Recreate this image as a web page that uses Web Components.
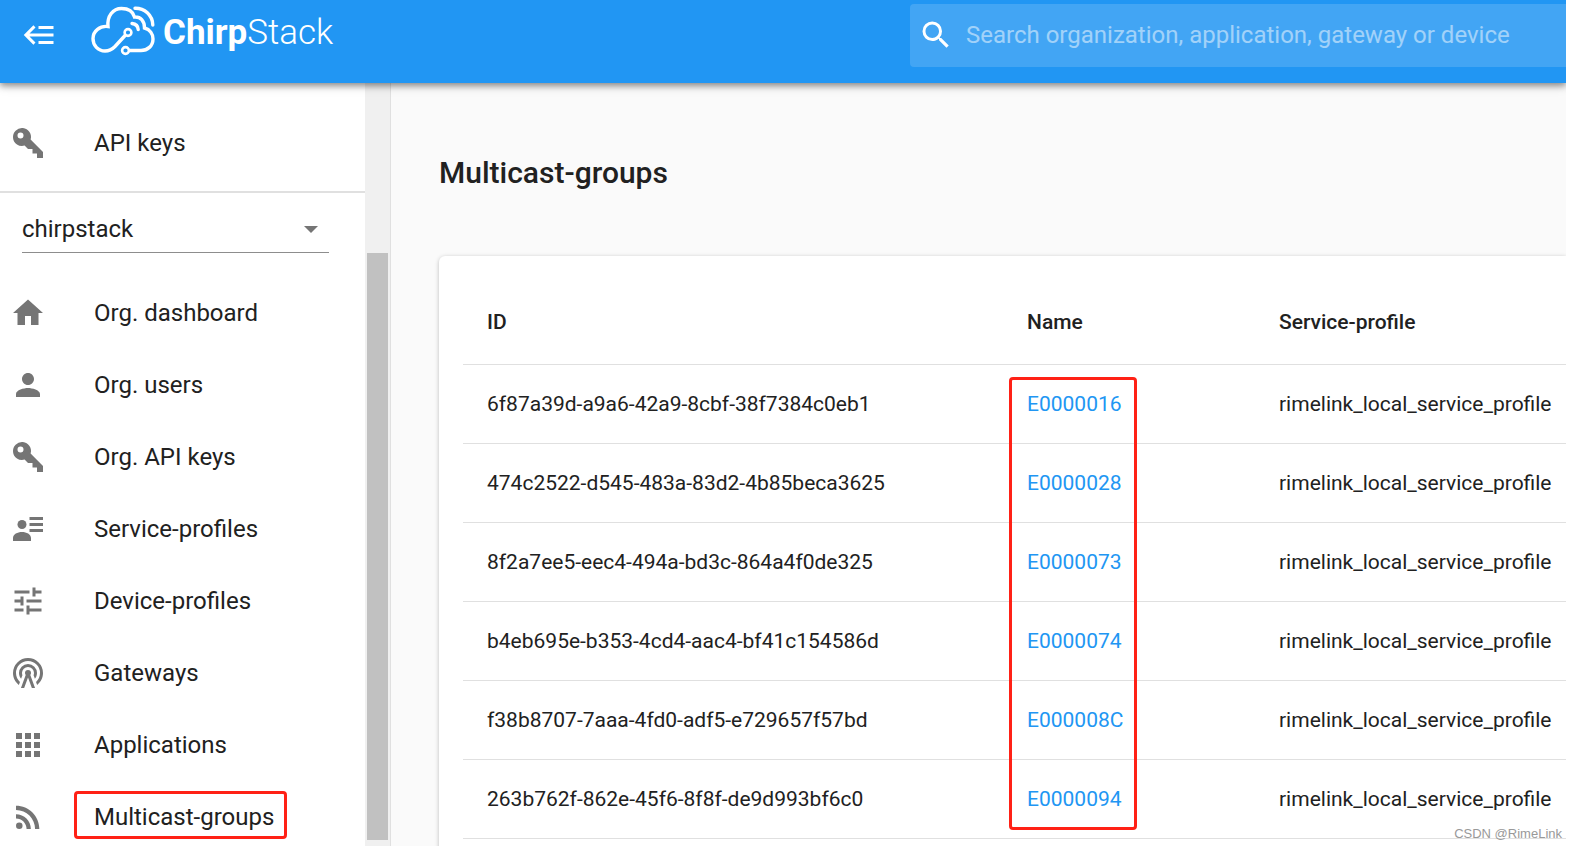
<!DOCTYPE html>
<html lang="en"><head><meta charset="utf-8"><title>ChirpStack</title>
<style>
html,body{margin:0;height:100%}
body{font-family:Roboto,"Liberation Sans",sans-serif;color:#212121;background:#fff;overflow:hidden;box-sizing:border-box;padding:0 10px 2px 0}
</style></head><body>
<chirp-app></chirp-app>
<script>
const ICONS={
key:'<path d="M22 18v4h-4v-3h-3v-3h-3l-2.260-2.260A6 6 0 1 1 13.740 9.740L22 18M7 5a2 2 0 1 0 0 4 2 2 0 0 0 0-4z"/>',
home:'<path d="M10 20v-6h4v6h5v-8h3L12 3 2 12h3v8z"/>',
user:'<path d="M12 12c2.210 0 4-1.790 4-4s-1.790-4-4-4-4 1.790-4 4 1.790 4 4 4zm0 2c-2.670 0-8 1.340-8 4v2h16v-2c0-2.660-5.330-4-8-4z"/>',
profile:'<circle cx="8" cy="9" r="3"/><path d="M2 20v-2C2 15.500 5 14 8 14s6 1.500 6 4v2zM13 4h9v2h-9zM13 8h9v2h-9zM13 12h9v2h-9z"/>',
tune:'<path d="M3 17v2h6v-2H3zM3 5v2h10V5H3zm10 16v-2h8v-2h-8v-2h-2v6h2zM7 9v2H3v2h4v2h2V9H7zm14 4v-2H11v2h10zm-6-4h2V7h4V5h-4V3h-2v6z"/>',
gateway:'<path d="M12,10A2,2 0 0,1 14,12C14,12.5 13.82,12.94 13.53,13.29L16.7,22H14.57L12,14.93L9.43,22H7.3L10.47,13.29C10.18,12.94 10,12.5 10,12A2,2 0 0,1 12,10M12,8A4,4 0 0,0 8,12C8,12.5 8.1,13 8.28,13.46L7.4,15.86C6.53,14.81 6,13.47 6,12A6,6 0 0,1 12,6A6,6 0 0,1 18,12C18,13.47 17.47,14.81 16.6,15.86L15.72,13.46C15.9,13 16,12.5 16,12A4,4 0 0,0 12,8M12,4A8,8 0 0,0 4,12C4,14.36 5,16.5 6.64,17.94L5.92,19.94C3.54,18.11 2,15.23 2,12A10,10 0 0,1 12,2A10,10 0 0,1 22,12C22,15.23 20.46,18.11 18.08,19.94L17.36,17.94C19,16.5 20,14.36 20,12A8,8 0 0,0 12,4Z"/>',
apps:'<path d="M4 4h4v4H4zM10 4h4v4h-4zM16 4h4v4h-4zM4 10h4v4H4zM10 10h4v4h-4zM16 10h4v4h-4zM4 16h4v4H4zM10 16h4v4h-4zM16 16h4v4h-4z"/>',
rss:'<circle cx="6.180" cy="17.820" r="2.180"/><path d="M4 4.440v2.830c7.030 0 12.730 5.700 12.730 12.730h2.830c0-8.590-6.970-15.560-15.560-15.560zm0 5.660v2.830c3.900 0 7.070 3.170 7.070 7.070h2.830c0-5.470-4.430-9.900-9.900-9.900z"/>',
search:'<path d="M15.500 14h-.79l-.28-.27A6.471 6.471 0 0 0 16 9.500 6.500 6.500 0 1 0 9.500 16c1.610 0 3.090-.59 4.230-1.570l.27.28v.79l5 4.990L20.490 19l-4.990-5zm-6 0C7.010 14 5 11.990 5 9.500S7.010 5 9.500 5 14 7.010 14 9.500 11.990 14 9.500 14z"/>',
menu:'<path d="M5,13L9,17L7.6,18.42L1.18,12L7.6,5.58L9,7L5,11H21V13H5M21,6V8H11V6H21M21,16V18H11V16H21Z"/>'
};
function define(name,html){
  const t=document.createElement('template');t.innerHTML=html;
  customElements.define(name,class extends HTMLElement{
    constructor(){super();this.attachShadow({mode:'open'}).append(t.content.cloneNode(true));}
  });
}
customElements.define('app-icon',class extends HTMLElement{
  connectedCallback(){
    if(this.shadowRoot)return;
    this.attachShadow({mode:'open'}).innerHTML='<style>:host{display:block;width:36px;height:36px;flex:none}svg{display:block;width:100%;height:100%;fill:currentColor}</style><svg viewBox="0 0 24 24" aria-hidden="true">'+(ICONS[this.getAttribute('name')]||'')+'</svg>';
  }
});
define('chirp-logo',`<style>
:host{display:flex;gap:8px;color:#fff}
svg{width:64px;height:50px;display:block}
.word{font-size:35px;line-height:40px;padding-top:7px;font-weight:300;white-space:nowrap}
b{font-weight:700}
</style>
<svg viewBox="0 0 64 50" fill="none" stroke="#fff" stroke-width="3.400" stroke-linecap="round" aria-hidden="true">
<path d="M34.500 29L24 40.500C21 43.500 18 45 14 45C7 45 2 39.500 2 32.500C2 25 9 19.500 17 20.500C16 10 22 2.500 30.500 2.500C37 2.500 42 5.500 43.500 11C49.500 10.500 53.500 15 53.500 22C59 23.500 62 28 62 33C62 40 56.500 44.500 50 44.500H38.500"/>
<path d="M44 2.200C53.500 2 61.500 9 61.800 19"/><path d="M41 17.500C45 18 47 20 47.200 23.500"/>
<circle cx="37" cy="26.500" r="3.400" fill="#2196f3" stroke-width="2.600"/><circle cx="34.500" cy="44.500" r="3.400" fill="#2196f3" stroke-width="2.600"/></svg>
<span class="word"><b>Chirp</b>Stack</span>`);
define('app-bar',`<style>
:host{display:flex;height:83px;flex:none;background:#2196f3;color:#fff;position:relative;z-index:2;box-shadow:0 3px 6px rgba(0,0,0,.35),0 1px 12px rgba(0,0,0,.2);box-sizing:border-box;padding:0 0 0 22px;align-items:flex-start}
button{border:0;background:none;padding:17px 0 0;margin:0 33px 0 0;color:inherit}
chirp-logo{margin-top:6px}
.search{display:flex;align-items:center;height:63px;margin:4px 0 0 auto;flex:0 1 656px;min-width:0;background:rgba(255,255,255,.15);border-radius:4px 0 0 4px;box-sizing:border-box;padding:0 0 2px 8px}
input{flex:1;min-width:0;border:0;background:none;outline:0;font:24px/32px Roboto,sans-serif;color:#fff;padding:0;margin-left:12px}
input::placeholder{color:#fff;opacity:.5}
</style>
<button aria-label="Toggle menu"><app-icon name="menu"></app-icon></button>
<chirp-logo></chirp-logo>
<label class="search"><app-icon name="search"></app-icon><input aria-label="Search" placeholder="Search organization, application, gateway or device"></label>`);
define('nav-item',`<style>
:host{display:block}
a{display:flex;align-items:center;height:72px;padding-left:10px;color:inherit;text-decoration:none;font-size:24px;line-height:32px}
app-icon{color:#757575;margin-right:28px}
span{padding:7px 10px 3px 17px;margin-bottom:4px;border:3px solid transparent;border-radius:4px;white-space:nowrap}
:host([marked]) span{border-color:#ff2116}
</style><a href="#"><app-icon></app-icon><span><slot></slot></span></a>`);
define('org-select',`<style>
:host{display:block;padding:12px 36px 0 22px}
div{position:relative;border-bottom:1px solid #8d8d8d}
select{appearance:none;display:block;width:100%;height:47px;border:0;background:none;color:inherit;font:24px/32px Roboto,sans-serif;padding:0}
i{position:absolute;right:11px;top:21px;border:7px solid transparent;border-top-color:#757575;border-bottom:0}
</style><div><select aria-label="Organization"><option>chirpstack</option></select><i></i></div>`);
const NAV=[['home','Org. dashboard'],['user','Org. users'],['key','Org. API keys'],['profile','Service-profiles'],['tune','Device-profiles'],['gateway','Gateways'],['apps','Applications'],['rss','Multicast-groups']];
customElements.define('side-nav',class extends HTMLElement{
  constructor(){
    super();
    const root=this.attachShadow({mode:'open'});
    root.innerHTML=`<style>
:host{display:flex;flex:none;width:391px;box-sizing:border-box;background:#fff;border-right:1px solid #e0e0e0}
nav{flex:1;padding-top:24px}
hr{border:0;border-top:2px solid #e0e0e0;margin:12px 0 0}
.items{padding-top:24px}
.track{width:25px;flex:none;box-sizing:border-box;background:#f0f0f0;padding:170px 2px 6px 2px;display:flex}
.thumb{flex:1;background:#c1c1c1}
</style><nav><nav-item icon="key">API keys</nav-item><hr><org-select></org-select><div class="items">${NAV.map(([i,t])=>`<nav-item icon="${i}"${i==='rss'?' marked':''}>${t}</nav-item>`).join('')}</div></nav><div class="track"><div class="thumb"></div></div>`;
    root.querySelectorAll('nav-item').forEach(n=>{
      const icon=document.createElement('app-icon');
      icon.setAttribute('name',n.getAttribute('icon'));
      n.shadowRoot.querySelector('app-icon').replaceWith(icon);
    });
  }
});
const ROWS=[['6f87a39d-a9a6-42a9-8cbf-38f7384c0eb1','E0000016'],['474c2522-d545-483a-83d2-4b85beca3625','E0000028'],['8f2a7ee5-eec4-494a-bd3c-864a4f0de325','E0000073'],['b4eb695e-b353-4cd4-aac4-bf41c154586d','E0000074'],['f38b8707-7aaa-4fd0-adf5-e729657f57bd','E000008C'],['263b762f-862e-45f6-8f8f-de9d993bf6c0','E0000094']];
define('group-table',`<style>
:host{display:block;background:#fff;border-radius:6px 0 0 0;box-shadow:0 1px 4px rgba(0,0,0,.25);padding:24px 0 24px 24px}
.wrap{position:relative}
table{width:100%;border-collapse:separate;border-spacing:0;table-layout:fixed}
th,td{height:78px;padding:0 0 0 24px;text-align:left;border-bottom:1px solid #e0e0e0;font-size:21px;line-height:30px;font-weight:400;white-space:nowrap}
th{height:84px;font-weight:500}
.id{width:516px}.name{width:228px}
a{color:#2196f3;text-decoration:none}
.mark{position:absolute;left:546px;top:97px;bottom:9px;width:122px;border:3px solid #ff2116;border-radius:4px;pointer-events:none}
</style><div class="wrap"><table><thead><tr><th class="id">ID</th><th class="name">Name</th><th>Service-profile</th></tr></thead><tbody>${ROWS.map(([a,b])=>`<tr><td>${a}</td><td><a href="#">${b}</a></td><td>rimelink_local_service_profile</td></tr>`).join('')}</tbody></table><div class="mark"></div></div>`);
define('chirp-app',`<style>
:host{display:flex;flex-direction:column;height:100%;overflow:hidden;position:relative;background:#fafafa}
.body{display:flex;flex:1;min-height:0}
main{flex:1;min-width:0;padding:70px 0 0 48px}
h1{font-size:30px;line-height:40px;font-weight:500;margin:0 0 63px}
.credit{position:absolute;right:4px;bottom:3px;font:13px/18px "Liberation Sans",sans-serif;color:#999}
</style><app-bar></app-bar><div class="body"><side-nav></side-nav><main><h1>Multicast-groups</h1><group-table></group-table></main></div><span class="credit">CSDN @RimeLink</span>`);
</script></body></html>
